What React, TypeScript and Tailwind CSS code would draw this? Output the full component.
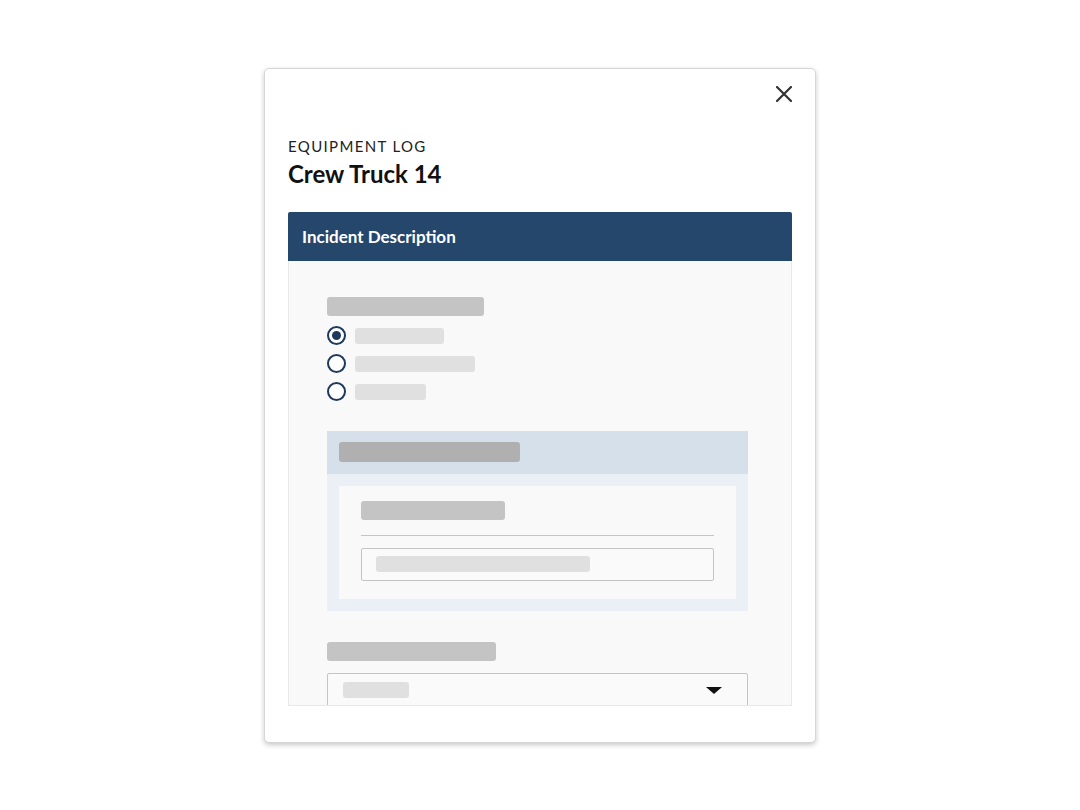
function Bar({ className }: { className: string }) {
  return <div className={`rounded-[3px] ${className}`} />;
}

function Radio({ checked, barWidth }: { checked?: boolean; barWidth: string }) {
  return (
    <div className="flex h-[19px] items-center">
      <span className="flex size-[19px] items-center justify-center rounded-full border-2 border-[#1d3a5c] bg-white">
        {checked && <span className="size-[9px] rounded-full bg-[#1d3a5c]" />}
      </span>
      <Bar className={`ml-[9px] h-4 bg-[#e0e0e0] ${barWidth}`} />
    </div>
  );
}

export default function App() {
  return (
    <div
      className="flex min-h-[810px] justify-center bg-white pt-[68px]"
      style={{ fontFamily: "Lato, 'Noto Sans', sans-serif" }}
    >
      <div className="flex h-[675px] w-[552px] flex-col rounded-[5px] border border-[#d6d6d6] bg-white px-[23px] pt-[17px] shadow-[0_2px_5px_rgba(0,0,0,0.22)]">
        <div className="flex justify-end">
          <button className="text-[#333]" aria-label="Close">
            <svg width="16" height="16" viewBox="0 0 16 16" className="block">
              <path d="M1 1l14 14M15 1L1 15" stroke="currentColor" strokeWidth="2.2" strokeLinecap="round" />
            </svg>
          </button>
        </div>

        <p className="mt-[34px] text-[15px] leading-5 tracking-[0.09em] text-[#222]">
          EQUIPMENT LOG
        </p>
        <h1 className="mt-[3px] text-[24px] font-bold leading-[30px] text-[#111]">Crew Truck 14</h1>

        <section className="mt-[23px] flex flex-col">
          <div className="flex h-[49px] items-center rounded-t-[2px] bg-[#24476b] px-[14px]">
            <h2 className="text-[17px] font-bold text-white">Incident Description</h2>
          </div>
          <div className="h-[445px] overflow-hidden border-x border-b border-[#e8e8e8] bg-[#f9f9f9] pl-[38px] pr-[43px] pt-9">
            <Bar className="h-[19px] w-[157px] bg-[#c4c4c4]" />
            <div className="mt-[10px] flex flex-col gap-[9px]">
              <Radio checked barWidth="w-[89px]" />
              <Radio barWidth="w-[120px]" />
              <Radio barWidth="w-[71px]" />
            </div>

            <div className="mt-[30px] flex flex-col">
              <div className="flex h-[43px] items-start bg-[#d6e0ea] pl-3 pt-[11px]">
                <Bar className="h-5 w-[181px] bg-[#b0b0b0]" />
              </div>
              <div className="bg-[#eaf0f6] p-3">
                <div className="bg-[#f9f9f9] px-[22px] pb-[18px] pt-[15px]">
                  <Bar className="h-[19px] w-[144px] bg-[#c4c4c4]" />
                  <div className="mt-[15px] h-px bg-[#c4c4c4]" />
                  <div className="mt-3 h-[33px] rounded-[2px] border border-[#c4c4c4] bg-[#fafafa] pl-[14px] pt-[7px]">
                    <Bar className="h-4 w-[214px] bg-[#e0e0e0]" />
                  </div>
                </div>
              </div>
            </div>

            <Bar className="mt-[31px] h-[19px] w-[169px] bg-[#c4c4c4]" />
            <div className="mt-3 flex h-[36px] items-start justify-between rounded-[2px] border border-[#c4c4c4] bg-[#fafafa] pl-[15px] pr-[25px] pt-2">
              <Bar className="h-4 w-[66px] bg-[#e0e0e0]" />
              <svg width="16" height="8" viewBox="0 0 16 8" className="mt-[5px]">
                <path d="M0 0h16L8 7z" fill="#111" />
              </svg>
            </div>
          </div>
        </section>
      </div>
    </div>
  );
}
